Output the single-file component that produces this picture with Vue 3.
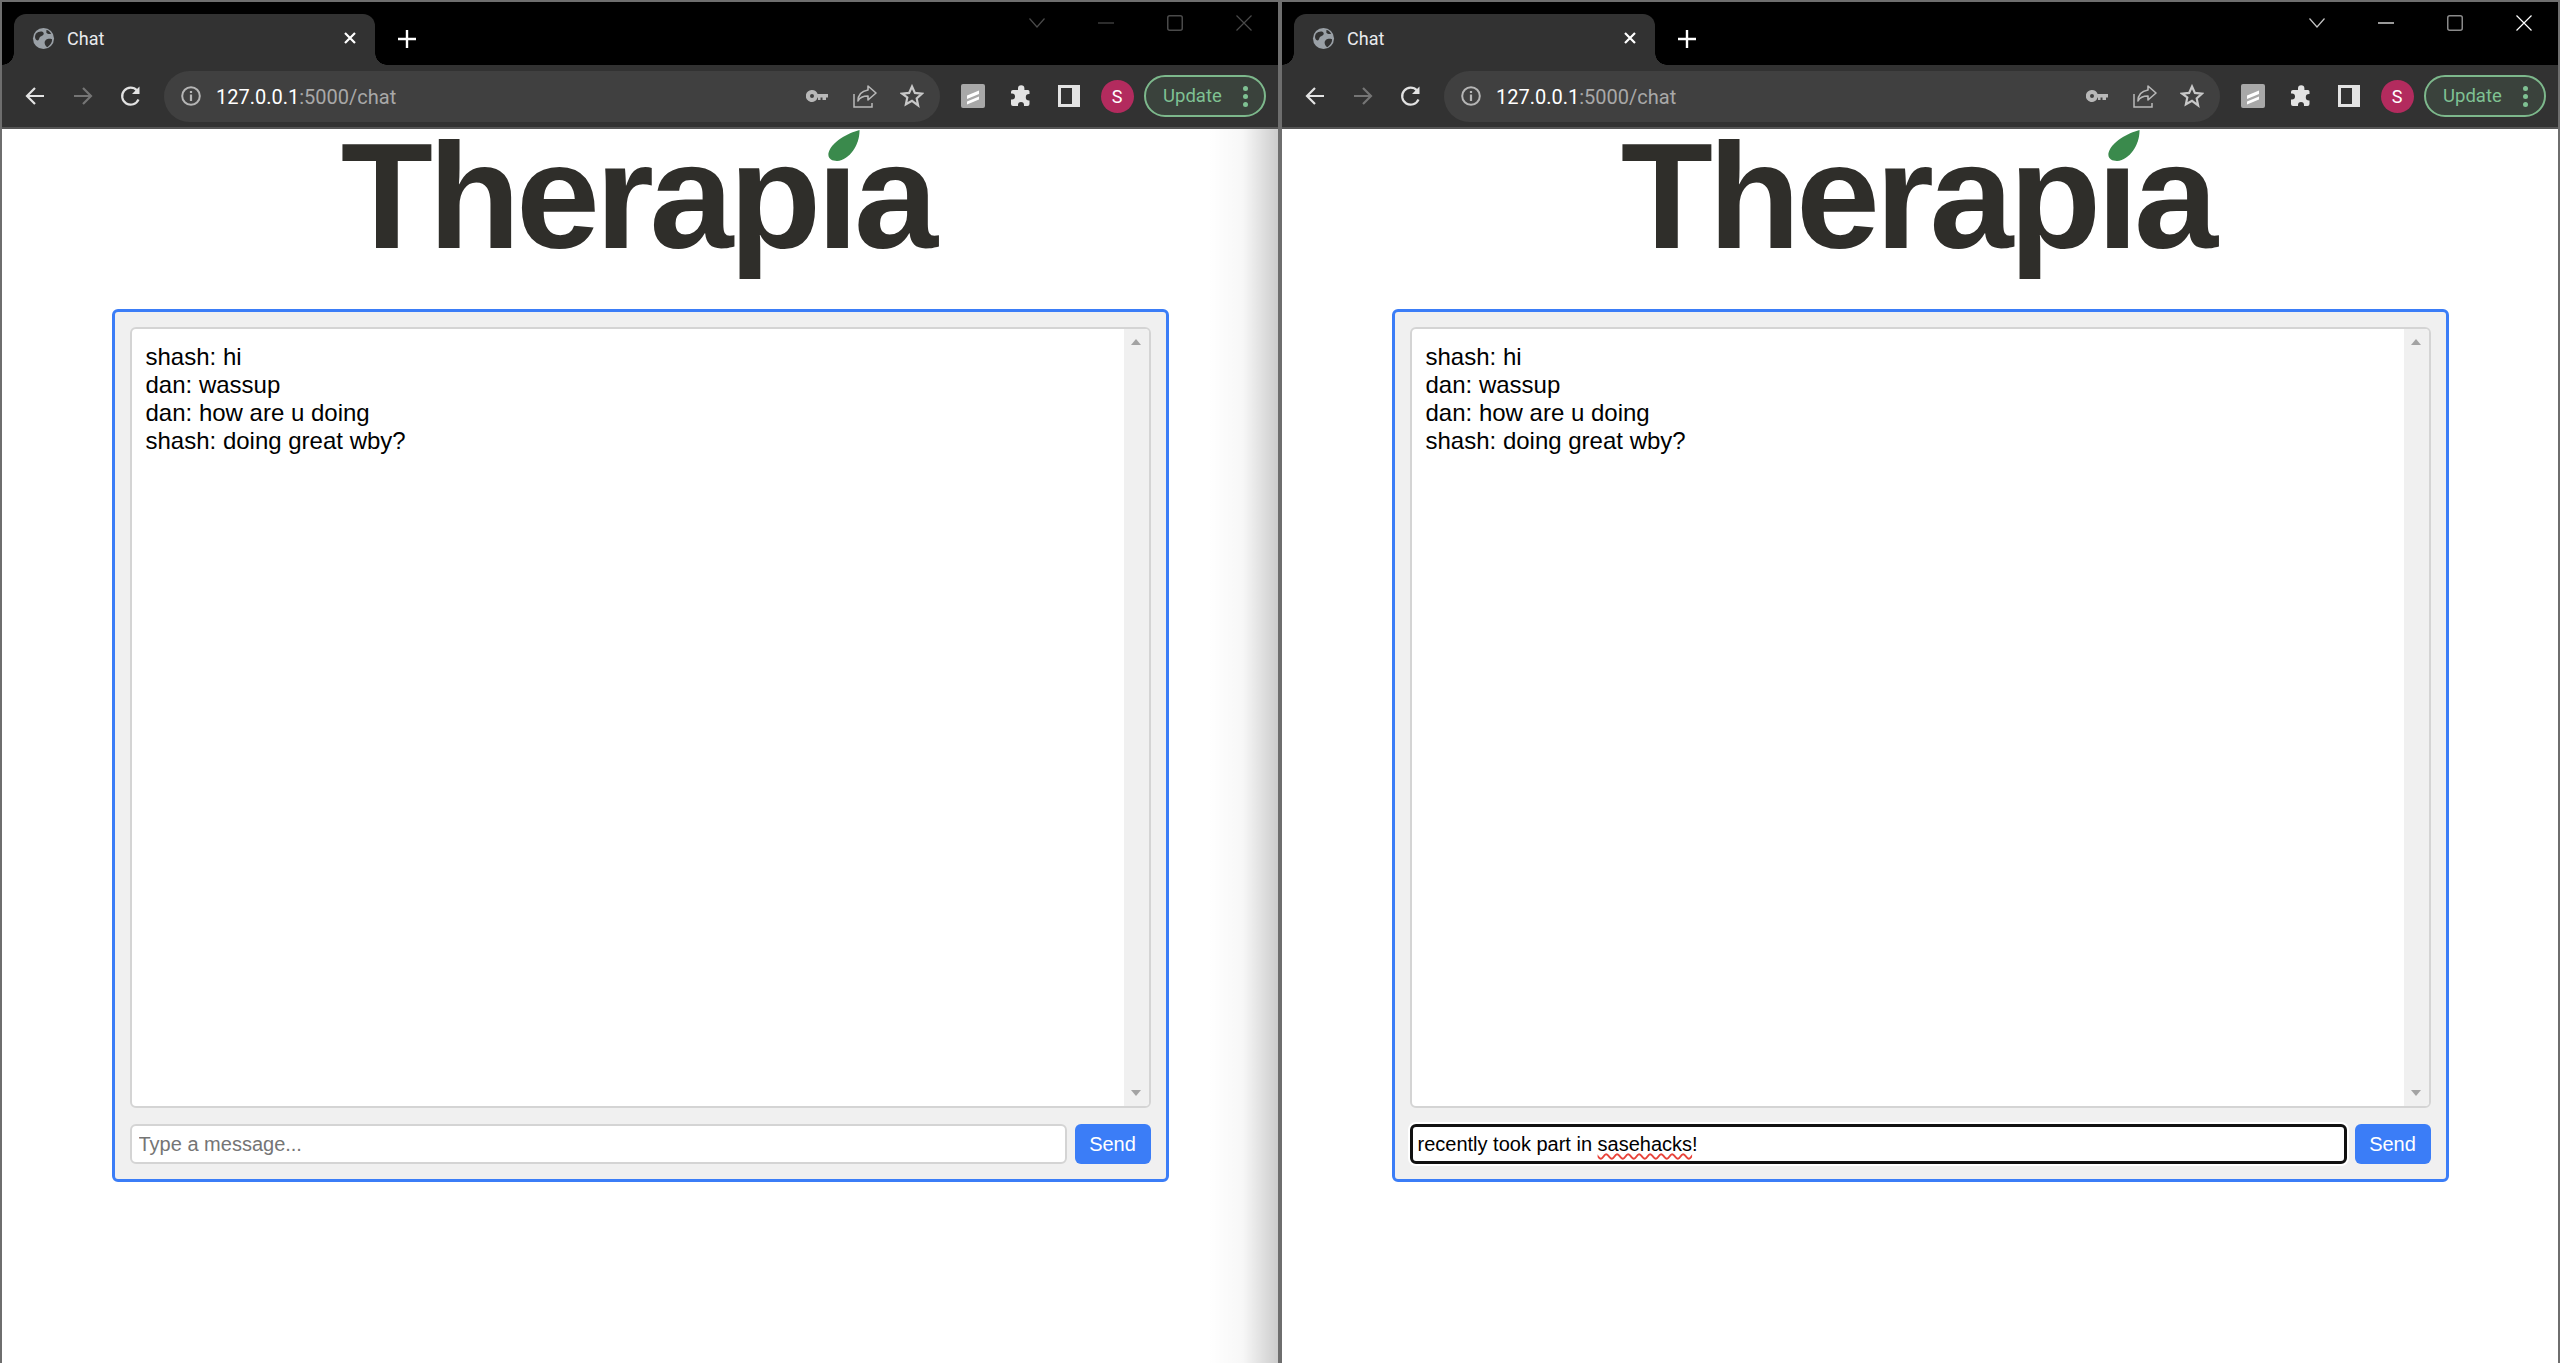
<template>
  <div class="desktop">
    <section v-for="win in windows" :key="win.id" class="window" :class="{ inactive: !win.active }">
      <!-- tab strip -->
      <header class="tabstrip">
        <div class="tab">
          <svg class="globe" viewBox="0 0 24 24" width="23" height="23">
            <circle cx="12" cy="12" r="11" fill="#9aa0a6" />
            <path d="M4 7c3-3 7-3 8-1s-1 3-3 4-1 4-3 4-4-3-2-7zM14 14c2-2 6-2 7-1 0 3-2 6-5 8-2-1-4-5-2-7zM15 3c2 0 4 2 5 4-2 1-4 0-5-1z" fill="#323232" />
          </svg>
          <span class="tab-title">Chat</span>
          <svg class="tab-close" viewBox="0 0 14 14" width="14" height="14">
            <path d="M2 2l10 10M12 2L2 12" stroke="#fff" stroke-width="2.2" fill="none" />
          </svg>
        </div>
        <svg class="new-tab" viewBox="0 0 18 18" width="18" height="18">
          <path d="M9 0v18M0 9h18" stroke="#fff" stroke-width="2.4" fill="none" />
        </svg>
        <div class="controls">
          <div class="control">
            <svg viewBox="0 0 16 10" width="16" height="10"><path d="M.5 .5L8 9l7.500-8.500" class="ctl chev" /></svg>
          </div>
          <div class="control">
            <svg viewBox="0 0 16 2" width="16" height="2"><path d="M0 1h16" class="ctl" /></svg>
          </div>
          <div class="control">
            <svg viewBox="0 0 16 16" width="16" height="16"><rect x=".75" y=".75" width="14.500" height="14.500" rx="2" class="ctl box" /></svg>
          </div>
          <div class="control">
            <svg viewBox="0 0 16 16" width="16" height="16"><path d="M.5 .5l15 15M15.500 .5l-15 15" class="ctl" /></svg>
          </div>
        </div>
      </header>

      <!-- toolbar -->
      <div class="toolbar">
        <div class="tool">
          <svg viewBox="0 0 20 20" width="20" height="20"><path d="M19 10H2M10 2l-8 8 8 8" class="line" /></svg>
        </div>
        <div class="tool">
          <svg viewBox="0 0 20 20" width="20" height="20"><path d="M1 10h17M10 2l8 8-8 8" class="line dim" /></svg>
        </div>
        <div class="tool">
          <svg viewBox="0 0 22 22" width="22" height="22">
            <path d="M18.500 14.500A8.500 8.500 0 1 1 17 5.500" class="line" />
            <path d="M19.500 1.500v7.500h-7.500z" fill="#e3e3e3" />
          </svg>
        </div>
        <div class="omnibox">
          <svg class="info" viewBox="0 0 20 20" width="20" height="20">
            <circle cx="10" cy="10" r="8.800" fill="none" stroke="#b5b5b5" stroke-width="2" />
            <path d="M10 8.500V15M10 5v2" stroke="#b5b5b5" stroke-width="2.200" fill="none" />
          </svg>
          <span class="url"><span class="host">127.0.0.1</span>:5000/chat</span>
          <div class="omni-actions">
            <div class="omni-action">
              <svg viewBox="0 0 22 12" width="22" height="12">
                <path d="M6 0a6 6 0 0 1 5.600 4H22v3.500h-2V10h-3.500V7.500h-2V10H12V7.500h-.4A6 6 0 1 1 6 0zm0 4a2 2 0 1 0 0 4 2 2 0 0 0 0-4z" fill="#b8b8b8" fill-rule="evenodd" />
              </svg>
            </div>
            <div class="omni-action">
              <svg viewBox="0 0 24 24" width="24" height="24">
                <path d="M1 10v13h18v-4" fill="none" stroke="#b8b8b8" stroke-width="1.500" />
                <path d="M15 2l8 7-8 7v-4c-5 0-8 1-10 5 0-6 4-10 10-11z" fill="none" stroke="#b8b8b8" stroke-width="1.600" stroke-linejoin="round" />
              </svg>
            </div>
            <div class="omni-action">
              <svg viewBox="0 0 24 24" width="24" height="24">
                <path d="M12 2.500l2.900 6.400 6.900.8-5.100 4.700 1.400 6.900L12 16.800l-6.100 3.500 1.400-6.900L2.200 9.700l6.900-.8z" fill="none" stroke="#c8c8c8" stroke-width="2.200" stroke-linejoin="miter" />
              </svg>
            </div>
          </div>
        </div>
        <div class="tool first-ext">
          <svg viewBox="0 0 24 24" width="24" height="24">
            <rect width="24" height="24" rx="2" fill="#a8a8a8" />
            <path d="M6 11.500l12-5v3.500l-12 5zM6 17.500l12-5v3l-12 5z" fill="#fff" />
          </svg>
        </div>
        <div class="tool">
          <svg viewBox="0 0 22 22" width="22" height="22">
            <path d="M8 3.500a3.200 3.200 0 0 1 6.400 0V5H18a1.500 1.500 0 0 1 1.500 1.500V9h-.5a3.200 3.200 0 0 0 0 6.400h.5V19a2 2 0 0 1-2 2h-3.500v-1a3 3 0 0 0-6 0v1H3a2 2 0 0 1-2-2v-4.500h1a3 3 0 0 0 0-6H1V7a2 2 0 0 1 2-2h5z" fill="#e3e3e3" />
          </svg>
        </div>
        <div class="tool">
          <svg viewBox="0 0 22 22" width="22" height="22">
            <rect width="22" height="22" fill="#e3e3e3" />
            <rect x="3" y="3" width="11" height="16" fill="#323232" />
          </svg>
        </div>
        <div class="tool">
          <span class="avatar">S</span>
        </div>
        <div class="update">
          <span>Update</span>
          <span class="dots"><i></i><i></i><i></i></span>
        </div>
      </div>

      <!-- page -->
      <main class="page">
        <div class="logo">
          Therapıa
          <svg class="leaf" viewBox="0 0 32 31" width="32" height="31">
            <path d="M31.500 0C20 3 3 12 .5 23-.5 29 4 31 9 31 22 30 32 14 31.500 0z" fill="#3a8a4c" />
          </svg>
        </div>
        <div class="chat-card">
          <div class="messages">
            <div class="message-list">
              <div v-for="(msg, i) in messages" :key="i">{{ msg }}</div>
            </div>
            <div class="scrollbar">
              <span class="arrow up"></span>
              <span class="arrow down"></span>
            </div>
          </div>
          <div class="input-row">
            <div v-if="win.draft" class="fake-input">recently took part in <span class="misspelt">sasehacks</span>!</div>
            <input v-else class="msg-input" type="text" placeholder="Type a message..." />
            <button class="send">Send</button>
          </div>
        </div>
      </main>
    </section>
  </div>
</template>

<script setup>
const windows = [
  { id: 1, active: false, draft: false },
  { id: 2, active: true, draft: true }
]

const messages = [
  'shash: hi',
  'dan: wassup',
  'dan: how are u doing',
  'shash: doing great wby?'
]
</script>

<style>
html, body {
  margin: 0;
  background: #fff;
  overflow: hidden;
}
</style>

<style scoped>
.desktop {
  display: flex;
  width: 2560px;
  height: 1363px;
  overflow: hidden;
  font-family: 'Liberation Sans', Arial, sans-serif;
}

.window {
  display: flex;
  flex-direction: column;
  width: 1280px;
  height: 1363px;
  box-sizing: border-box;
  border: 2px solid #6e6e6e;
  border-bottom: none;
}

/* tab strip */
.tabstrip {
  display: flex;
  align-items: flex-start;
  height: 63px;
  background: #000;
}

.tab {
  position: relative;
  display: flex;
  align-items: center;
  width: 361px;
  height: 51px;
  margin: 12px 0 0 12px;
  padding: 0 0 3px 18px;
  box-sizing: border-box;
  background: #323232;
  border-radius: 12px 12px 0 0;
  font-family: Roboto, sans-serif;
  font-size: 18px;
  color: #e8eaed;
}

.tab::before,
.tab::after {
  content: '';
  position: absolute;
  bottom: 0;
  width: 12px;
  height: 12px;
}

.tab::before {
  left: -12px;
  background: radial-gradient(circle at 0 0, #000 11.500px, #323232 12px);
}

.tab::after {
  right: -12px;
  background: radial-gradient(circle at 100% 0, #000 11.500px, #323232 12px);
}

.tab-title {
  margin-left: 12px;
}

.tab-close {
  margin-left: auto;
  margin-right: 18px;
}

.new-tab {
  margin: 28px 0 0 23px;
}

.controls {
  display: flex;
  margin-left: auto;
}

.control {
  display: flex;
  align-items: center;
  justify-content: center;
  width: 69px;
  height: 42px;
}

.ctl {
  fill: none;
  stroke: #fff;
  stroke-width: 1.200;
}

.ctl.chev {
  stroke: #c4c4c4;
}

.ctl.box {
  stroke: #8a8a8a;
  stroke-width: 1.500;
}

.inactive .ctl,
.inactive .ctl.chev,
.inactive .ctl.box {
  stroke: #4a4a4a;
}

/* toolbar */
.toolbar {
  display: flex;
  align-items: center;
  height: 62px;
  padding-left: 9px;
  background: #323232;
  border-bottom: 2px solid #555;
  box-sizing: content-box;
}

.tool {
  display: flex;
  align-items: center;
  justify-content: center;
  width: 48px;
  flex: none;
}

.first-ext {
  margin-left: 9px;
}

.line {
  fill: none;
  stroke: #e3e3e3;
  stroke-width: 2.200;
}

.line.dim {
  stroke: #757575;
}

.omnibox {
  display: flex;
  align-items: center;
  width: 776px;
  height: 51px;
  margin-left: 9px;
  padding: 0 4px 0 17px;
  box-sizing: border-box;
  background: #404040;
  border-radius: 26px;
}

.info {
  flex: none;
}

.url {
  margin-left: 15px;
  padding-top: 1px;
  font-family: Roboto, sans-serif;
  font-size: 20px;
  color: #a8a8a8;
}

.host {
  color: #fff;
}

.omni-actions {
  display: flex;
  margin-left: auto;
}

.omni-action {
  display: flex;
  align-items: center;
  justify-content: center;
  width: 47.500px;
}

.avatar {
  display: flex;
  align-items: center;
  justify-content: center;
  width: 33px;
  height: 33px;
  border-radius: 50%;
  background: #b32b5e;
  color: #fff;
  font-family: Roboto, sans-serif;
  font-size: 18px;
}

.update {
  display: flex;
  align-items: center;
  width: 122px;
  height: 42px;
  margin-left: 3px;
  padding-left: 17px;
  box-sizing: border-box;
  border: 2px solid #7db88c;
  border-radius: 21px;
  background: #3a423c;
  color: #7fc193;
  font-family: Roboto, sans-serif;
  font-size: 18.500px;
}

.dots {
  display: flex;
  flex-direction: column;
  gap: 3px;
  margin-left: 21px;
}

.dots i {
  display: block;
  width: 5px;
  height: 5px;
  border-radius: 50%;
  background: #7fc193;
}

/* page */
.page {
  position: relative;
  display: flex;
  flex: 1;
  flex-direction: column;
  align-items: center;
  background: #fff;
}

.inactive .page::after {
  content: '';
  position: absolute;
  top: 0;
  right: 0;
  bottom: 0;
  width: 70px;
  background: linear-gradient(90deg, rgba(0, 0, 0, 0), rgba(0, 0, 0, 0.03) 50%, rgba(0, 0, 0, 0.2));
}

.logo {
  position: relative;
  font-size: 151px;
  font-weight: 700;
  line-height: 133px;
  letter-spacing: -4.600px;
  color: #2f2e2a;
  margin: 0 6px 47px 0;
}

.leaf {
  position: absolute;
  top: 1px;
  left: 487px;
}

.chat-card {
  display: flex;
  flex-direction: column;
  gap: 16px;
  width: 1057px;
  height: 873px;
  padding: 15px;
  box-sizing: border-box;
  background: #f0f0f0;
  border: 3px solid #3b7df7;
  border-radius: 6px;
}

.messages {
  display: flex;
  flex: 1;
  background: #fff;
  border: 2px solid #d4d4d4;
  border-radius: 6px;
  overflow: hidden;
}

.message-list {
  flex: 1;
  padding: 14px 14px;
  font-size: 24px;
  line-height: 28px;
  color: #000;
}

.scrollbar {
  display: flex;
  flex-direction: column;
  justify-content: space-between;
  align-items: center;
  width: 25px;
  padding: 10px 0 10px;
  box-sizing: border-box;
  background: #f0f0f0;
}

.arrow {
  width: 0;
  height: 0;
  border-left: 5.500px solid transparent;
  border-right: 5.500px solid transparent;
}

.arrow.up {
  border-bottom: 6px solid #a3a3a3;
}

.arrow.down {
  border-top: 6px solid #a3a3a3;
}

.input-row {
  display: flex;
  gap: 8px;
  height: 40px;
}

.msg-input,
.fake-input {
  flex: 1;
  min-width: 0;
  height: 40px;
  box-sizing: border-box;
  padding: 0 7px;
  background: #fff;
  border: 2px solid #d4d4d4;
  border-radius: 6px;
  font-family: 'Liberation Sans', Arial, sans-serif;
  font-size: 20px;
  color: #000;
  outline: none;
}

.msg-input::placeholder {
  color: #757575;
  opacity: 1;
}

.fake-input {
  line-height: 34px;
  border: 3px solid #111;
  box-shadow: 0 0 0 2px #fff;
  padding: 0 5px;
}

.misspelt {
  text-decoration: underline wavy #e8433a 1.500px;
  text-underline-offset: 2px;
}

.send {
  width: 76px;
  height: 40px;
  padding: 0;
  border: none;
  border-radius: 6px;
  background: #3b7df7;
  color: #fff;
  font-family: 'Liberation Sans', Arial, sans-serif;
  font-size: 20px;
}
</style>
